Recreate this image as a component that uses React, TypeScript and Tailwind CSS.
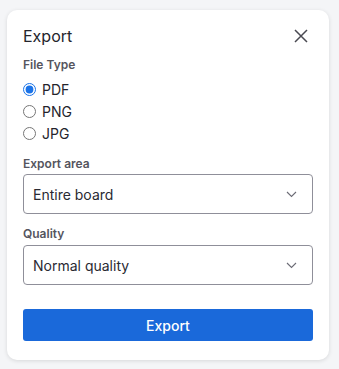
import { useState } from "react";

const Chevron = () => (
  <svg width="11" height="7" viewBox="0 0 11 7" fill="none" className="text-[#6b6b75]">
    <path d="M1 1l4.5 4.5L10 1" stroke="currentColor" strokeWidth="1.1" />
  </svg>
);

const SelectBox = ({ value }: { value: string }) => (
  <div className="flex h-[40px] items-center justify-between rounded-[4px] border border-[#8f8f99] pl-[9px] pr-[15px] text-[14px] text-[#2a2a33]">
    <span>{value}</span>
    <Chevron />
  </div>
);

const App = () => {
  const [type, setType] = useState("PDF");

  return (
    <div className="min-h-[369px] bg-[#f4f5f7] pt-[10px] pl-[7px] font-['Inter',sans-serif]">
      <div className="w-[322px] rounded-[10px] bg-white px-[16px] pt-[14px] pb-[19px] shadow-[0_1px_4px_rgba(0,0,0,0.12)]">
        <div className="flex items-center justify-between">
          <h2 className="text-[16px] text-[#24242c]">Export</h2>
          <svg width="14" height="14" viewBox="0 0 14 14" className="mr-[5px] text-[#4a4a52]">
            <path d="M1 1l12 12M13 1L1 13" stroke="currentColor" strokeWidth="1.5" />
          </svg>
        </div>

        <div className="mt-[8px] text-[12px] font-semibold text-[#55555e]">File Type</div>
        <div className="mt-[4px] flex flex-col">
          {["PDF", "PNG", "JPG"].map((t) => (
            <label key={t} className="flex h-[22px] items-center gap-[6px] text-[14px] text-[#24242c]">
              <input
                type="radio"
                name="type"
                checked={type === t}
                onChange={() => setType(t)}
                className="m-0 h-[13px] w-[13px] accent-[#1a73e8]"
              />
              {t}
            </label>
          ))}
        </div>

        <div className="mt-[11px] text-[12px] font-semibold text-[#55555e]">Export area</div>
        <div className="mt-[1px]">
          <SelectBox value="Entire board" />
        </div>

        <div className="mt-[11px] text-[12px] font-semibold text-[#55555e]">Quality</div>
        <div className="mt-[2px]">
          <SelectBox value="Normal quality" />
        </div>

        <button className="mt-[24px] h-[32px] w-full rounded-[3px] bg-[#1a69da] text-[14px] font-medium text-white">
          Export
        </button>
      </div>
    </div>
  );
};

export default App;
